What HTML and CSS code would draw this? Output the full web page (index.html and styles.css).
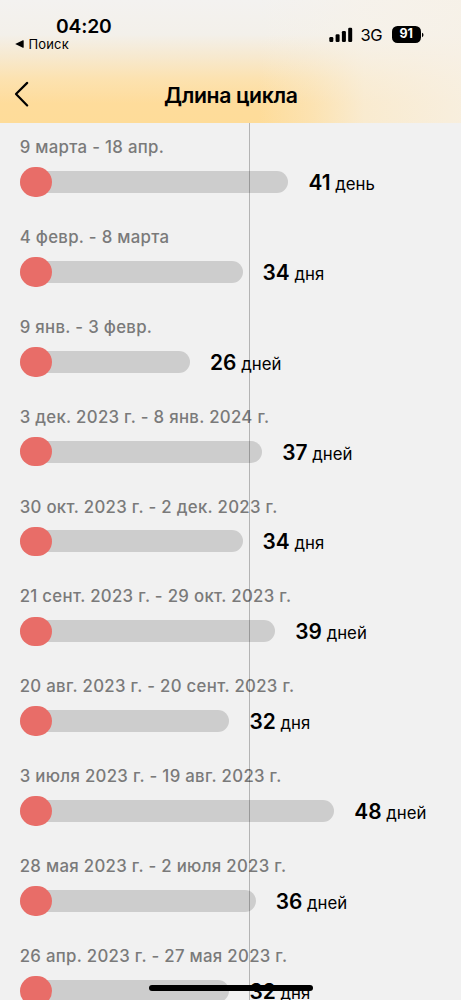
FILE: index.html
```html
<!DOCTYPE html>
<html lang="ru">
<head>
<meta charset="utf-8">
<title>Длина цикла</title>
<link rel="stylesheet" href="styles.css">
</head>
<body>
<div class="screen">
  <header class="header">
    <div class="status">
      <div class="status-left">
        <span class="time">04:20</span>
        <span class="return"><svg width="9" height="8" viewBox="0 0 9 8"><path d="M0.2 4 7.9 0.2Q8.7 0 8.7 .8V7.2Q8.7 8 7.9 7.8Z"/></svg><span>Поиск</span></span>
      </div>
      <div class="status-right">
        <svg class="signal" width="24" height="16" viewBox="0 0 24 16"><rect x="0.3" y="10" width="4" height="5" rx="1.2"/><rect x="6.6" y="7.3" width="4" height="7.7" rx="1.2"/><rect x="12.9" y="4" width="4" height="11" rx="1.2"/><rect x="19.2" y="0.8" width="4" height="14.2" rx="1.2"/></svg>
        <span class="network">3G</span>
        <span class="battery">91</span>
        <svg class="cap" width="2" height="6" viewBox="0 0 2 6"><path d="M0 0.8Q1.5 1.4 1.5 3T0 5.2Z"/></svg>
      </div>
    </div>
    <nav class="nav">
      <svg class="back" width="16" height="26" viewBox="0 0 16 26"><path d="M13.2 1.9 2 13 13.2 24.4"/></svg>
      <h1 class="title">Длина цикла</h1>
    </nav>
  </header>
  <main class="list">
    <section class="cycle"><div class="dates">9 марта - 18 апр.</div><div class="row"><div class="bar" style="width:268.7px"><i class="period"></i></div><div class="days"><b>41</b> день</div></div></section>
    <section class="cycle"><div class="dates">4 февр. - 8 марта</div><div class="row"><div class="bar" style="width:222.9px"><i class="period"></i></div><div class="days"><b>34</b> дня</div></div></section>
    <section class="cycle"><div class="dates">9 янв. - 3 февр.</div><div class="row"><div class="bar" style="width:170.4px"><i class="period"></i></div><div class="days"><b>26</b> дней</div></div></section>
    <section class="cycle"><div class="dates">3 дек. 2023 г. - 8 янв. 2024 г.</div><div class="row"><div class="bar" style="width:242.5px"><i class="period"></i></div><div class="days"><b>37</b> дней</div></div></section>
    <section class="cycle"><div class="dates">30 окт. 2023 г. - 2 дек. 2023 г.</div><div class="row"><div class="bar" style="width:222.9px"><i class="period"></i></div><div class="days"><b>34</b> дня</div></div></section>
    <section class="cycle"><div class="dates">21 сент. 2023 г. - 29 окт. 2023 г.</div><div class="row"><div class="bar" style="width:255.6px"><i class="period"></i></div><div class="days"><b>39</b> дней</div></div></section>
    <section class="cycle"><div class="dates">20 авг. 2023 г. - 20 сент. 2023 г.</div><div class="row"><div class="bar" style="width:209.8px"><i class="period"></i></div><div class="days"><b>32</b> дня</div></div></section>
    <section class="cycle"><div class="dates">3 июля 2023 г. - 19 авг. 2023 г.</div><div class="row"><div class="bar" style="width:314.6px"><i class="period"></i></div><div class="days"><b>48</b> дней</div></div></section>
    <section class="cycle"><div class="dates">28 мая 2023 г. - 2 июля 2023 г.</div><div class="row"><div class="bar" style="width:236px"><i class="period"></i></div><div class="days"><b>36</b> дней</div></div></section>
    <section class="cycle"><div class="dates">26 апр. 2023 г. - 27 мая 2023 г.</div><div class="row"><div class="bar" style="width:209.8px"><i class="period"></i></div><div class="days"><b>32</b> дня</div></div></section>
    <div class="average"></div>
  </main>
  <div class="home"></div>
</div>
</body>
</html>
```
FILE: styles.css
```css
* { box-sizing: border-box; }
body { margin: 0; background: #f1f1f1; color: #000; font-family: Inter, "Liberation Sans", sans-serif; }
svg { display: block; flex: none; }
.screen { position: relative; width: 461px; height: 1000px; overflow: hidden; display: flex; flex-direction: column; }
.header {
  height: 123px; flex: none; display: flex; flex-direction: column;
  background:
    linear-gradient(90deg, rgba(247,242,233,0) 56%, rgba(247,242,233,.3) 68%, rgba(247,242,233,.68) 79%, rgba(247,241,231,.88) 100%),
    linear-gradient(180deg, #f3f2f0 0%, #f3f0ea 28%, #f7e9cf 46%, #fce2b0 64%, #fedc9b 84%, #fedc99 100%);
}
.status { height: 68px; display: flex; justify-content: space-between; }
.status-left { padding: 14px 0 0 15px; display: flex; flex-direction: column; }
.time { margin-left: 41px; font-size: 19.3px; line-height: 24px; font-weight: 600; letter-spacing: -.15px; }
.return { display: flex; align-items: center; gap: 4.5px; font-size: 13px; line-height: 12px; letter-spacing: .15px; height: 12px; }
.status-right { height: 20px; margin: 25px 37px 0 0; display: flex; align-items: center; }
.signal { margin-top: -1px; }
.network { margin-left: 8px; width: 23px; font-size: 16.5px; line-height: 20px; white-space: nowrap; letter-spacing: -.5px; }
.battery { margin-left: 8px; width: 29.5px; height: 16.5px; margin-top: -1px; border-radius: 5.5px; background: #000; color: #fff; font-size: 12.5px; line-height: 16.5px; font-weight: 700; text-align: center; }
.cap { margin-left: 1px; }
.nav { height: 55px; display: flex; align-items: center; padding: 0 0 3px 13.5px; }
.back path { fill: none; stroke: #000; stroke-width: 2.2; stroke-linecap: round; stroke-linejoin: round; }
.title { margin: 2px 29px 0 0; flex: 1; text-align: center; font-size: 21.2px; line-height: 26px; font-weight: 600; letter-spacing: -.35px; }
.list { position: relative; flex: 1; padding: 14px 0 0 19.7px; overflow: hidden; }
.cycle { height: 89.9px; }
.dates { height: 20px; line-height: 20px; margin-bottom: 9.9px; font-size: 16.8px; font-weight: 500; letter-spacing: .3px; color: #7a7a7a; white-space: nowrap; }
.row { height: 30px; display: flex; align-items: center; gap: 20px; }
.bar { height: 22px; flex: none; display: flex; align-items: center; border-radius: 11px; background: #cdcdcd; }
.period { width: 32.5px; height: 29.7px; flex: none; border-radius: 15px; background: #e86d68; }
.days { padding-top: 3px; font-size: 16.8px; line-height: 24px; white-space: nowrap; }
.days b { font-size: 20.9px; font-weight: 600; }
.average { position: absolute; left: 249px; top: 0; bottom: 0; width: 1px; background: rgba(0,0,0,.25); }
.home { position: absolute; left: 148.5px; top: 984.5px; width: 164px; height: 6px; border-radius: 3px; background: #000; }
```
